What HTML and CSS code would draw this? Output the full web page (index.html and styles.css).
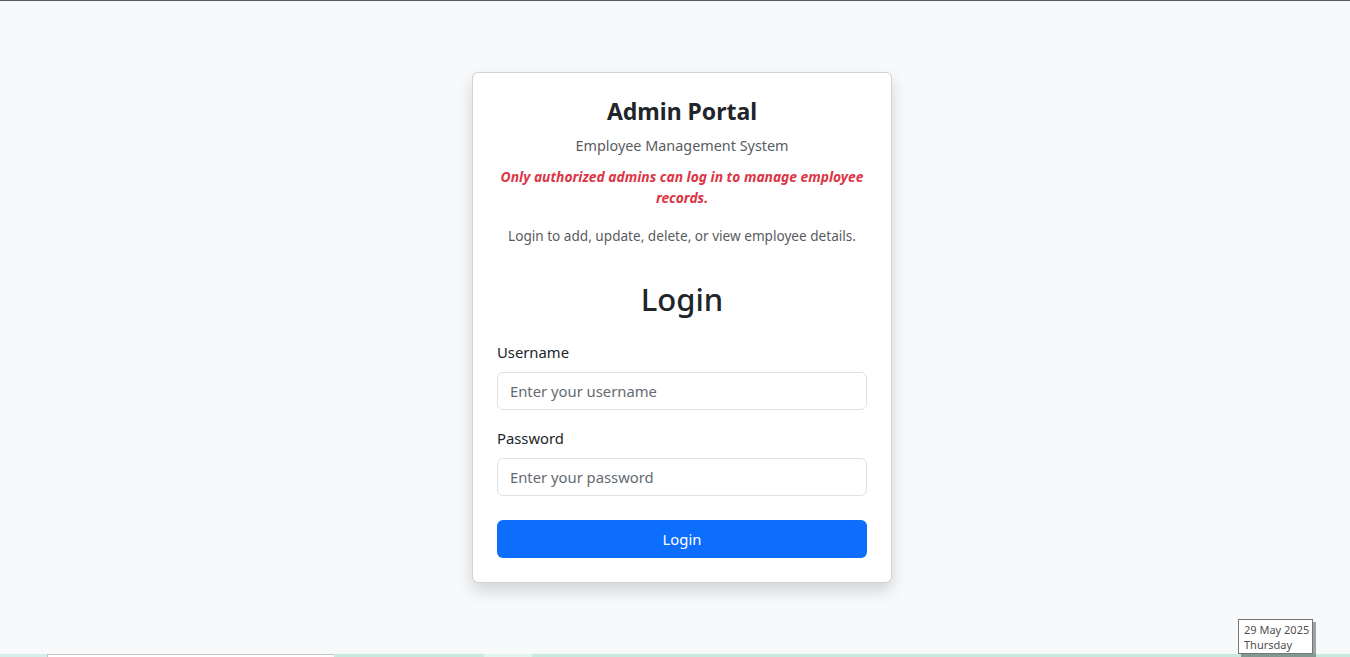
FILE: index.html
```html
<!DOCTYPE html>
<html lang="en">
<head>
<meta charset="utf-8">
<title>Admin Portal - Login</title>
<link rel="stylesheet" href="styles.css">
</head>
<body>
  <div class="topline"></div>
  <main class="page">
    <section class="card">
      <h3 class="title">Admin Portal</h3>
      <p class="subtitle">Employee Management System</p>
      <p class="warning">Only authorized admins can log in to manage employee records.</p>
      <p class="info">Login to add, update, delete, or view employee details.</p>
      <h2 class="login-heading">Login</h2>
      <form class="form">
        <label class="label" for="username">Username</label>
        <input class="input" id="username" type="text" placeholder="Enter your username">
        <label class="label" for="password">Password</label>
        <input class="input input-last" id="password" type="password" placeholder="Enter your password">
        <button class="btn" type="button">Login</button>
      </form>
    </section>
  </main>
  <div class="strip">
    <div class="seg seg-a"></div>
    <div class="seg seg-white"></div>
    <div class="seg seg-b"></div>
    <div class="seg seg-light"></div>
    <div class="seg seg-c"></div>
  </div>
  <div class="tooltip">29 May 2025<br>Thursday</div>
</body>
</html>
```

FILE: styles.css
```css
* { box-sizing: border-box; }

html, body {
  margin: 0;
  height: 657px;
  overflow: hidden;
}

body {
  background: #f8f9fa;
  font-family: "Noto Sans", "Open Sans", sans-serif;
  color: #212529;
  display: flex;
  flex-direction: column;
  position: relative;
}

.topline {
  height: 1px;
  background: #5c5c5c;
  flex: none;
}

.page {
  flex: 1;
  display: flex;
  justify-content: center;
  align-items: flex-start;
  padding-left: 14px;
  padding-top: 71px;
}

.card {
  width: 420px;
  background: #fff;
  border: 1px solid rgba(0, 0, 0, 0.175);
  border-radius: 6px;
  box-shadow: 0 8px 16px rgba(0, 0, 0, 0.15);
  padding: 24px 24px 24px;
  text-align: center;
}

.title {
  margin: 0 0 8px;
  font-size: 23px;
  font-weight: 700;
  line-height: 29px;
}

.subtitle {
  margin: 0 0 8px;
  font-size: 14.4px;
  line-height: 24px;
  color: #595c5f;
}

.warning {
  margin: 0 0 17px;
  font-size: 13.8px;
  line-height: 21px;
  font-weight: 700;
  font-style: italic;
  color: #dc3545;
}

.info {
  margin: 0 0 33px;
  font-size: 13.6px;
  line-height: 21px;
  color: #595c5f;
}

.login-heading {
  margin: 0 0 21px;
  font-size: 31px;
  font-weight: 500;
  line-height: 40px;
}

.form {
  display: flex;
  flex-direction: column;
  text-align: left;
}

.label {
  font-size: 14.8px;
  line-height: 24px;
  margin-bottom: 8px;
}

.input {
  height: 38px;
  border: 1px solid #dee2e6;
  border-radius: 6px;
  padding: 0 12px;
  font-family: inherit;
  font-size: 14.8px;
  color: #212529;
  background: #fff;
  margin-bottom: 16px;
  outline: none;
}

.input::placeholder {
  color: #646b72;
}

.input-last {
  margin-bottom: 24px;
}

.btn {
  height: 38px;
  border: none;
  border-radius: 6px;
  background: #0d6efd;
  color: #fff;
  font-family: inherit;
  font-size: 14.8px;
}

.strip {
  height: 3px;
  flex: none;
  display: flex;
}

.seg { height: 3px; }
.seg-a { width: 47px; background: #d5f0e8; }
.seg-white {
  width: 287px;
  background: #fff;
  border-top: 1px solid #c4c4c4;
  border-left: 1px solid #c4c4c4;
}
.seg-b { width: 150px; background: #c7ebdf; }
.seg-light { width: 48px; background: #e2f5ef; }
.seg-c { flex: 1; background: #c7ebdf; }

.tooltip {
  position: absolute;
  left: 1238px;
  top: 619px;
  width: 75px;
  height: 35px;
  background: #fff;
  border: 1px solid #767676;
  box-shadow: 3px 3px 0 rgba(0, 0, 0, 0.35);
  padding: 2px 0 0 5px;
  font-size: 11px;
  line-height: 15px;
  color: #505050;
  font-family: "Noto Sans", "Open Sans", sans-serif;
}
```
